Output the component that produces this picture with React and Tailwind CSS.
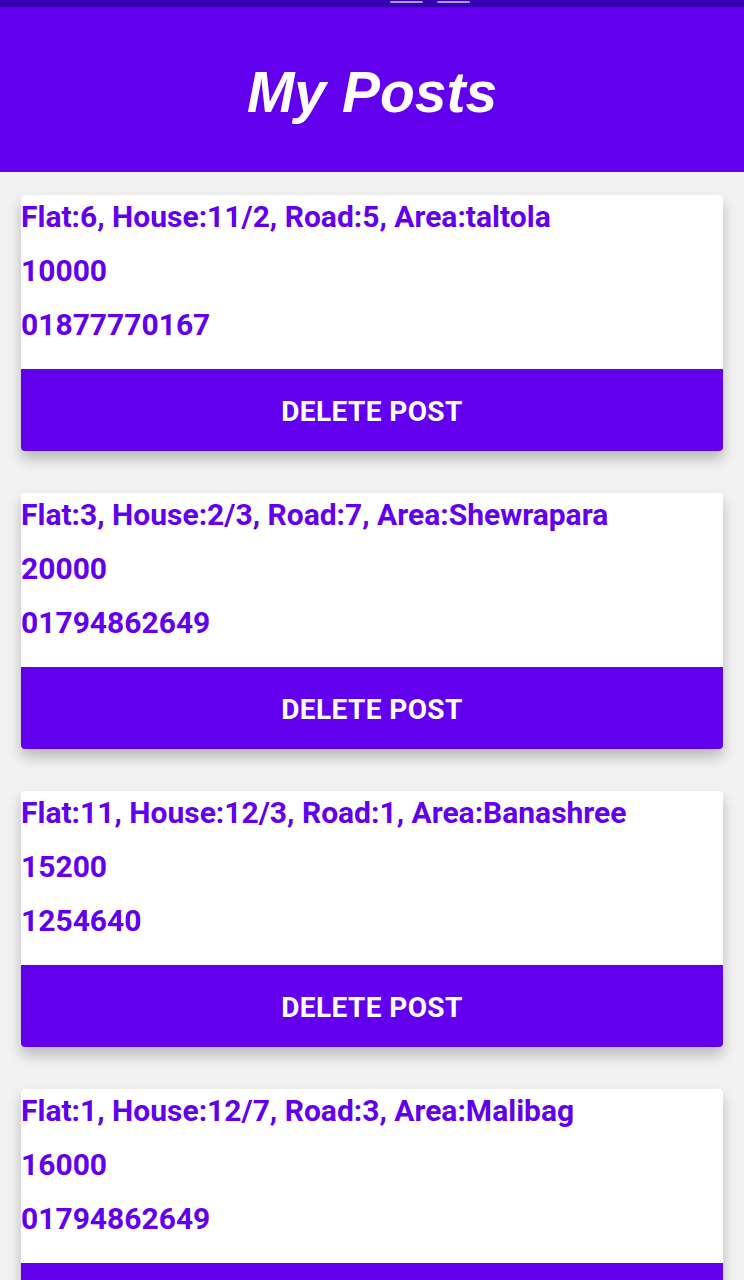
import React from 'react'

const posts = [
  { address: 'Flat:6, House:11/2, Road:5, Area:taltola', rent: '10000', phone: '01877770167' },
  { address: 'Flat:3, House:2/3, Road:7, Area:Shewrapara', rent: '20000', phone: '01794862649' },
  { address: 'Flat:11, House:12/3, Road:1, Area:Banashree', rent: '15200', phone: '1254640' },
  { address: 'Flat:1, House:12/7, Road:3, Area:Malibag', rent: '16000', phone: '01794862649' },
];

const PostCard = ({ post }) => {
  return (
    <div className="bg-white rounded-[4px] shadow-[0_8px_14px_rgba(0,0,0,0.24)] overflow-hidden">
      <div className="flex flex-col gap-[10px] text-[#6200ee] font-bold text-[30px] leading-[44px]">
        <div className="whitespace-nowrap">{post.address}</div>
        <div>{post.rent}</div>
        <div>{post.phone}</div>
      </div>
      <button className="mt-[22px] w-full h-[82px] pt-[3px] bg-[#6200ee] text-white font-bold text-[28px] tracking-[0.4px] flex items-center justify-center">
        DELETE POST
      </button>
    </div>
  );
};

const App = () => {
  return (
    <div className="w-[744px] h-[1280px] overflow-hidden bg-[#f2f2f2] font-['Roboto',sans-serif]">
      <div className="h-[7px] bg-[#3700b3] flex items-start overflow-hidden">
        <div className="ml-[390px] flex gap-[14px] pt-[1px]">
          <div className="w-[33px] h-[2px] bg-white/60 rounded-full"></div>
          <div className="w-[33px] h-[2px] bg-white/60 rounded-full"></div>
        </div>
      </div>
      <div className="h-[165px] bg-[#6200ee] flex items-center justify-center pt-[6px]">
        <h1 className="text-white italic font-bold text-[57px] leading-none font-['Liberation_Sans',sans-serif]">My Posts</h1>
      </div>
      <div className="px-[21px] pt-[23px] flex flex-col gap-[42px]">
        {posts.map((post, i) => (
          <PostCard key={i} post={post} />
        ))}
      </div>
    </div>
  );
};

export default App;
